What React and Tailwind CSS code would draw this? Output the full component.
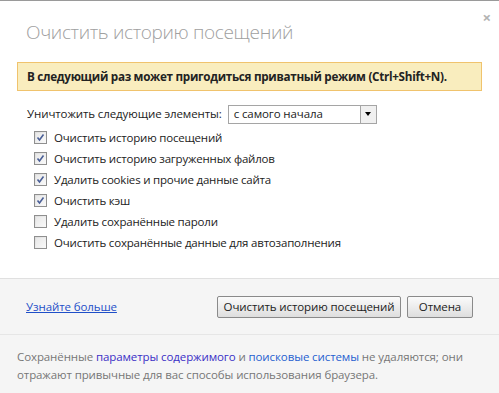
import React from "react";

function Check({ checked }) {
  return (
    <span className="w-[13px] h-[13px] border border-[#8f8f8f] bg-gradient-to-br from-[#dcdcdc] to-[#fbfbfb] flex items-center justify-center shrink-0">
      <span className="w-[9px] h-[9px] bg-gradient-to-br from-[#e8e8e8] to-[#f8f8f8] flex items-center justify-center">
        {checked && (
          <svg width="9" height="9" viewBox="0 0 9 9">
            <path d="M1.5 4.5 L3.5 7 L7.5 1.5" stroke="#4a5f97" strokeWidth="1.6" fill="none" />
          </svg>
        )}
      </span>
    </span>
  );
}

const items = [
  ["Очистить историю посещений", true],
  ["Очистить историю загруженных файлов", true],
  ["Удалить cookies и прочие данные сайта", true],
  ["Очистить кэш", true],
  ["Удалить сохранённые пароли", false],
  ["Очистить сохранённые данные для автозаполнения", false],
];

export default function App() {
  return (
    <div
      className="w-[499px] h-[393px] bg-white border-t border-[#9a9a9a] flex flex-col text-[11.5px] text-[#222]"
      style={{ fontFamily: '"Open Sans", "Noto Sans", sans-serif' }}
    >
      <div className="relative h-[61px] shrink-0">
        <div className="pl-[26px] pt-[18px] text-[19px] leading-[26px] text-[#a0a0a0] font-light tracking-[-0.35px]">
          Очистить историю посещений
        </div>
        <span className="absolute right-[8px] top-[6px] text-[#b3b3b3] text-[15px] font-bold leading-[20px]">×</span>
      </div>
      <div className="mx-[17px] h-[29px] border border-[#f0c36d] bg-[#f9edbe] flex items-center pl-[9px] font-bold text-[11.7px] text-[#222] tracking-[-0.3px] whitespace-nowrap">
        В следующий раз может пригодиться приватный режим (Ctrl+Shift+N).
      </div>
      <div className="flex items-center pl-[27px] mt-[14px] h-[18px]">
        <span className="tracking-[-0.1px]">Уничтожить следующие элементы:</span>
        <div className="ml-[6px] w-[149px] h-[19px] border border-[#a5a5a5] flex items-center justify-between pl-[5px]">
          <span className="tracking-[-0.1px]">с самого начала</span>
          <span className="w-[16px] h-[17px] border-l border-[#a5a5a5] bg-[#f0f0f0] flex items-center justify-center">
            <span className="w-0 h-0 border-l-[3.5px] border-r-[3.5px] border-t-[4px] border-l-transparent border-r-transparent border-t-black" />
          </span>
        </div>
      </div>
      <div className="flex flex-col pl-[34px] mt-[7px] gap-[6px]">
        {items.map(([t, c]) => (
          <label key={t} className="flex items-center gap-[7px] h-[15px]">
            <Check checked={c} />
            <span className="tracking-[-0.2px]">{t}</span>
          </label>
        ))}
      </div>
      <div className="mt-[28px] border-t border-[#e0e0e0] bg-[#f5f5f5] flex-1 flex flex-col">
        <div className="h-[56px] flex items-center pl-[26px] pr-[26px] border-b border-[#e6e6e6]">
          <a className="text-[#1f4fc8] underline tracking-[-0.1px]">Узнайте больше</a>
          <div className="ml-auto flex gap-[6px]">
            <button className="h-[22px] w-[184px] border border-[#8a8a8a] rounded-[2px] bg-gradient-to-b from-[#fbfbfb] to-[#dedede] tracking-[-0.1px]">
              Очистить историю посещений
            </button>
            <button className="h-[22px] w-[66px] border border-[#8a8a8a] rounded-[2px] bg-gradient-to-b from-[#fbfbfb] to-[#dedede] tracking-[-0.1px]">
              Отмена
            </button>
          </div>
        </div>
        <div className="pl-[17px] pt-[13px] text-[#777] leading-[18px] tracking-[-0.1px]">
          Сохранённые <span className="text-[#3a2fc6]">параметры содержимого</span> и{" "}
          <span className="text-[#1f5fd0]">поисковые системы</span> не удаляются; они
          <br />
          отражают привычные для вас способы использования браузера.
        </div>
      </div>
    </div>
  );
}
